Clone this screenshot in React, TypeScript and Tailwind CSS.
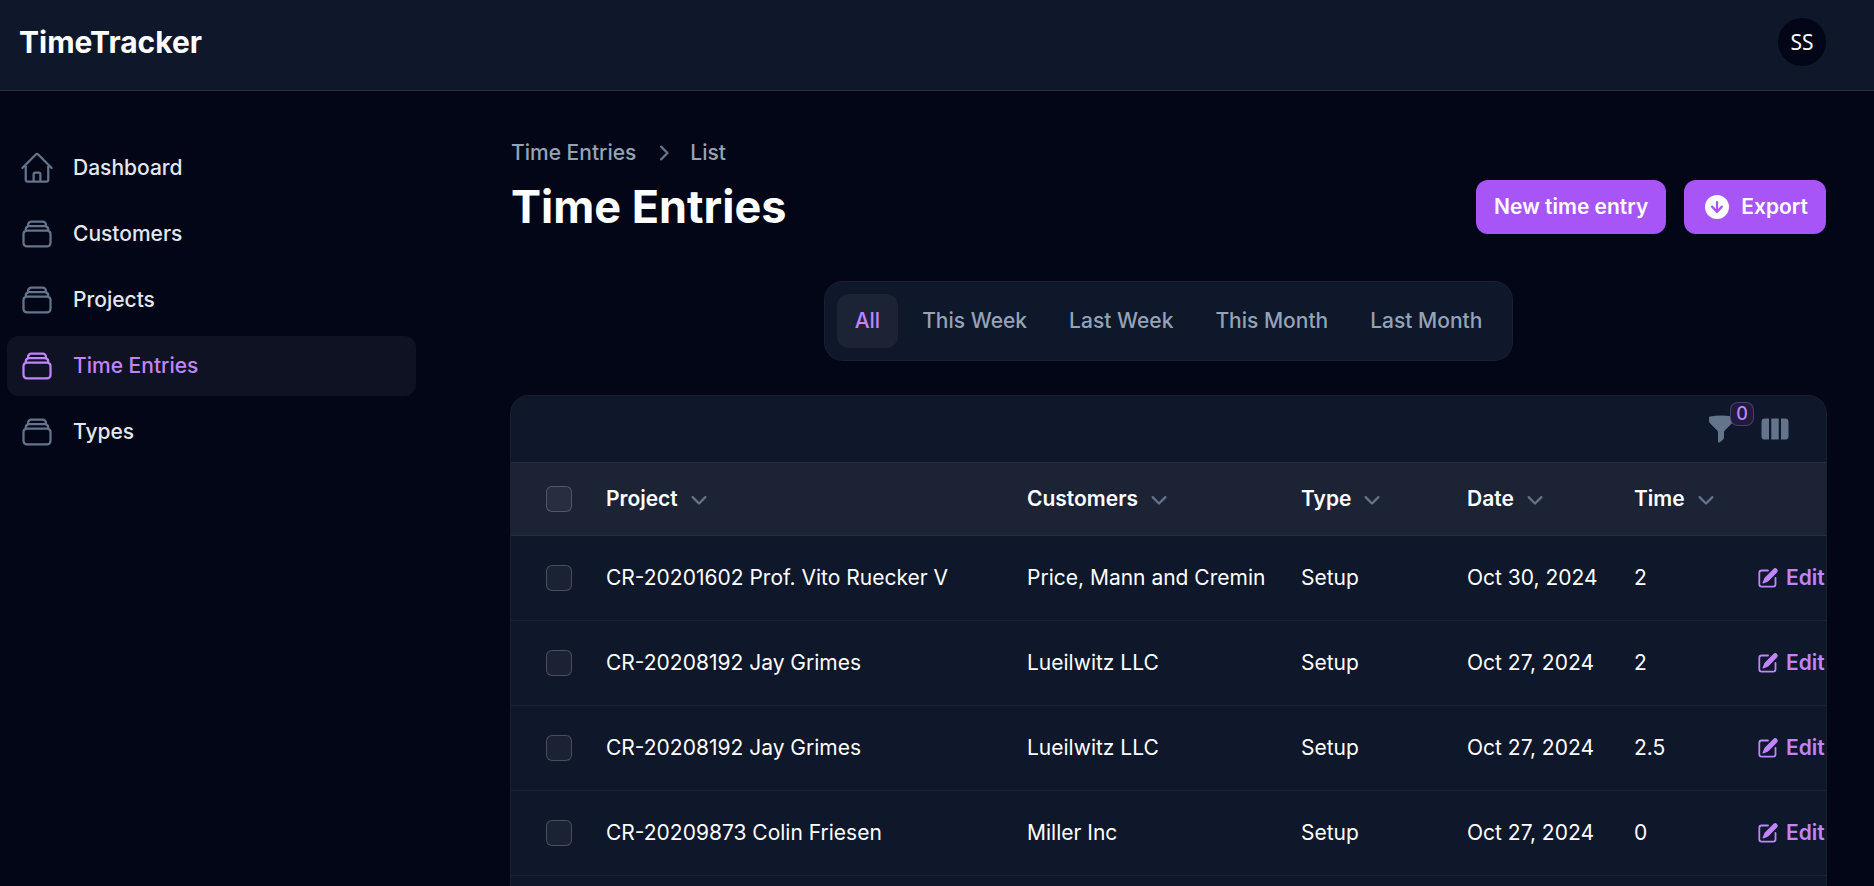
import { useState } from "react"
import {
  HiMiniArrowDownCircle,
  HiMiniChevronDown,
  HiMiniChevronRight,
  HiMiniFunnel,
  HiMiniPencilSquare,
  HiMiniViewColumns,
  HiOutlineHome,
  HiOutlineRectangleStack,
} from "react-icons/hi2"

interface TimeEntry {
  project: string
  customer: string
  type: string
  date: string
  time: string
}

const navItems = [
  { label: "Dashboard", icon: HiOutlineHome },
  { label: "Customers", icon: HiOutlineRectangleStack },
  { label: "Projects", icon: HiOutlineRectangleStack },
  { label: "Time Entries", icon: HiOutlineRectangleStack, active: true },
  { label: "Types", icon: HiOutlineRectangleStack },
]

const tabs = ["All", "This Week", "Last Week", "This Month", "Last Month"]

const columns = [
  { label: "Project", width: "w-[421px]" },
  { label: "Customers", width: "w-[274px]" },
  { label: "Type", width: "w-[166px]" },
  { label: "Date", width: "w-[167px]" },
  { label: "Time", width: "w-[122px]" },
]

const entries: TimeEntry[] = [
  { project: "CR-20201602 Prof. Vito Ruecker V", customer: "Price, Mann and Cremin", type: "Setup", date: "Oct 30, 2024", time: "2" },
  { project: "CR-20208192 Jay Grimes", customer: "Lueilwitz LLC", type: "Setup", date: "Oct 27, 2024", time: "2" },
  { project: "CR-20208192 Jay Grimes", customer: "Lueilwitz LLC", type: "Setup", date: "Oct 27, 2024", time: "2.5" },
  { project: "CR-20209873 Colin Friesen", customer: "Miller Inc", type: "Setup", date: "Oct 27, 2024", time: "0" },
]

function Checkbox({ label }: { label: string }) {
  return (
    <input
      type="checkbox"
      aria-label={label}
      className="block size-[26px] appearance-none rounded-md border border-white/20 bg-white/5 checked:bg-[#a855f7]"
    />
  )
}

function Topbar() {
  return (
    <header className="flex items-center justify-between border-b border-white/10 bg-[#0f172a] pt-4.5 pr-12 pb-6 pl-[19px]">
      <a href="#" className="text-[30px] leading-9 font-bold text-white">
        TimeTracker
      </a>
      <button
        type="button"
        className="size-12 rounded-full bg-[#020617] font-['Noto_Sans',sans-serif] text-[21px] text-white"
      >
        SS
      </button>
    </header>
  )
}

function Sidebar() {
  return (
    <nav className="w-[416px] shrink-0 pt-[47px] pl-[7px]">
      <ul className="flex flex-col gap-1.5">
        {navItems.map(({ label, icon: Icon, active }) => (
          <li key={label}>
            <a
              href="#"
              className={`flex h-15 items-center gap-4.5 rounded-xl px-3 font-medium ${
                active ? "bg-white/5 text-[#c084fc]" : "text-[#e2e8f0]"
              }`}
            >
              <Icon className={`size-9 ${active ? "text-[#c084fc]" : "text-[#64748b]"}`} />
              {label}
            </a>
          </li>
        ))}
      </ul>
    </nav>
  )
}

function PageHeader() {
  return (
    <div className="flex items-end justify-between gap-6">
      <div>
        <nav aria-label="Breadcrumb" className="mb-3 flex items-center gap-3 font-medium text-[#94a3b8]">
          <a href="#">Time Entries</a>
          <HiMiniChevronRight className="size-7.5 text-[#64748b]" />
          <a href="#">List</a>
        </nav>
        <h1 className="text-[45px] leading-[54px] font-bold text-white">Time Entries</h1>
      </div>
      <div className="flex shrink-0 gap-4.5">
        <button type="button" className="h-13.5 rounded-xl bg-[#a855f7] px-4.5 font-semibold text-white">
          New time entry
        </button>
        <button
          type="button"
          className="flex h-13.5 items-center gap-[9px] rounded-xl bg-[#a855f7] px-4.5 font-semibold text-white"
        >
          <HiMiniArrowDownCircle className="size-7.5" />
          Export
        </button>
      </div>
    </div>
  )
}

function Tabs() {
  const [current, setCurrent] = useState("All")

  return (
    <div role="tablist" className="mx-auto flex gap-1.5 rounded-[18px] bg-[#0f172a] p-3 ring-1 ring-white/10">
      {tabs.map((tab) => (
        <button
          key={tab}
          type="button"
          role="tab"
          aria-selected={tab === current}
          onClick={() => setCurrent(tab)}
          className={`h-13.5 rounded-xl px-4.5 font-medium ${
            tab === current ? "bg-white/5 text-[#c084fc]" : "text-[#94a3b8]"
          }`}
        >
          {tab}
        </button>
      ))}
    </div>
  )
}

function EntriesTable() {
  return (
    <section className="flex-1 overflow-hidden rounded-t-[18px] bg-[#0f172a] ring-1 ring-white/10">
      <div className="flex justify-end gap-6 px-9 py-4.5 text-[#64748b]">
        <button type="button" aria-label="Filter" className="relative">
          <HiMiniFunnel className="size-7.5" />
          <span className="absolute -top-3 left-6 flex size-6 items-center justify-center rounded-lg border border-[#c084fc]/30 bg-[#1f1b3a] text-lg leading-none font-medium text-[#c084fc]">
            0
          </span>
        </button>
        <button type="button" aria-label="Toggle columns">
          <HiMiniViewColumns className="size-7.5" />
        </button>
      </div>
      <div className="overflow-x-auto border-t border-white/10 [scrollbar-width:none]">
        <table className="w-full min-w-[1340px] table-fixed border-separate border-spacing-0 text-left whitespace-nowrap text-white">
          <thead className="bg-white/5">
            <tr>
              <th className="h-[73px] w-[77px] border-b border-white/5 pl-[35px]">
                <Checkbox label="Select all entries" />
              </th>
              {columns.map(({ label, width }) => (
                <th key={label} className={`${width} border-b border-white/5 px-4.5`}>
                  <button type="button" className="flex items-center gap-1.5 font-semibold">
                    {label}
                    <HiMiniChevronDown className="size-7.5 text-[#64748b]" />
                  </button>
                </th>
              ))}
              <th aria-label="Actions" className="border-b border-white/5" />
            </tr>
          </thead>
          <tbody>
            {entries.map((entry, index) => (
              <tr key={index} className="*:border-b *:border-white/5">
                <td className="h-[85px] pl-[35px]">
                  <Checkbox label={`Select ${entry.project}`} />
                </td>
                <td className="px-4.5">{entry.project}</td>
                <td className="px-4.5">{entry.customer}</td>
                <td className="px-4.5">{entry.type}</td>
                <td className="px-4.5">{entry.date}</td>
                <td className="px-4.5">{entry.time}</td>
                <td className="pl-4.5">
                  <a href="#" className="flex items-center gap-1.5 font-semibold text-[#c084fc]">
                    <HiMiniPencilSquare className="size-6 shrink-0" />
                    Edit
                  </a>
                </td>
              </tr>
            ))}
          </tbody>
        </table>
      </div>
    </section>
  )
}

export default function App() {
  return (
    <div className="flex h-screen flex-col overflow-hidden bg-[#020617] font-[Inter,sans-serif] text-[21px] leading-[30px]">
      <Topbar />
      <div className="flex min-h-0 flex-1">
        <Sidebar />
        <main className="flex min-w-0 flex-1 flex-col pt-[47px] pr-12 pl-[95px]">
          <PageHeader />
          <div className="mt-12 flex">
            <Tabs />
          </div>
          <div className="mt-9 flex flex-1 flex-col">
            <EntriesTable />
          </div>
        </main>
      </div>
    </div>
  )
}
